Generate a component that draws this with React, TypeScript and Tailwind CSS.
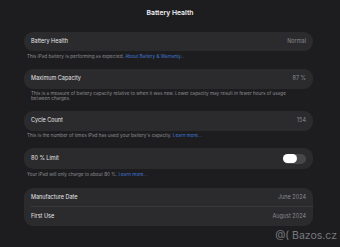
import React from 'react';

function Row({ label, value, children }: { label: string; value?: string; children?: React.ReactNode }) {
  return (
    <div className="flex h-[18.5px] items-center justify-between px-[7px]">
      <span className="text-[5.5px] text-[#e6e6e8]">{label}</span>
      {value ? <span className="text-[5.5px] text-[#8a8a8e]">{value}</span> : children}
    </div>
  );
}

function Card({ children, className = '' }: { children: React.ReactNode; className?: string }) {
  return <div className={`rounded-[9px] bg-[#2b2b2d] ${className}`}>{children}</div>;
}

function Caption({ children, className = '' }: { children: React.ReactNode; className?: string }) {
  return <p className={`text-[4.65px] leading-[5.5px] text-[#8a8a8e] ${className}`}>{children}</p>;
}

function Link({ children }: { children: React.ReactNode }) {
  return <span className="text-[#3f78d6]">{children}</span>;
}

export default function App() {
  return (
    <div
      className="relative h-[247px] w-[340px] overflow-hidden bg-[#1d1d1f]"
      style={{ fontFamily: 'Inter, "Liberation Sans", sans-serif' }}
    >
      <div className="flex h-[32px] items-start justify-center pt-[8px]">
        <h1 className="text-[6.8px] font-semibold text-[#f2f2f4]">Battery Health</h1>
      </div>

      <div className="ml-[24px] w-[289px]">
        <Card>
          <div className="h-[19px] flex items-center justify-between px-[7px]">
            <span className="text-[5.5px] text-[#e6e6e8]">Battery Health</span>
            <span className="text-[5.5px] text-[#8a8a8e]">Normal</span>
          </div>
        </Card>
        <Caption className="mt-[3px] pl-[3px]">
          This iPad battery is performing as expected. <Link>About Battery &amp; Warranty...</Link>
        </Caption>

        <Card className="mt-[9px]">
          <div className="h-[20px] flex items-center justify-between px-[7px]">
            <span className="text-[5.5px] text-[#e6e6e8]">Maximum Capacity</span>
            <span className="text-[5.5px] text-[#8a8a8e]">87 %</span>
          </div>
        </Card>
        <Caption className="mt-[2px] px-[7px]">
          This is a measure of battery capacity relative to when it was new. Lower capacity may result in fewer hours of usage
          between charges.
        </Caption>

        <Card className="mt-[9px]">
          <div className="h-[20px] flex items-center justify-between px-[7px]">
            <span className="text-[5.5px] text-[#e6e6e8]">Cycle Count</span>
            <span className="text-[5.5px] text-[#8a8a8e]">154</span>
          </div>
        </Card>
        <Caption className="mt-[2px] pl-[3px]">
          This is the number of times iPad has used your battery's capacity. <Link>Learn more...</Link>
        </Caption>

        <Card className="mt-[10px]">
          <div className="h-[21px] flex items-center justify-between px-[7px]">
            <span className="text-[5.5px] text-[#e6e6e8]">80 % Limit</span>
            <div className="flex h-[10px] w-[23px] items-center rounded-full bg-[#47474a]">
              <div className="h-[9px] w-[14px] rounded-full bg-white" />
            </div>
          </div>
        </Card>
        <Caption className="mt-[3px] pl-[3px]">
          Your iPad will only charge to about 80 %. <Link>Learn more...</Link>
        </Caption>

        <Card className="mt-[10px]">
          <Row label="Manufacture Date" value="June 2024" />
          <div className="ml-[7px] h-px bg-[#3a3a3c]" />
          <Row label="First Use" value="August 2024" />
        </Card>
      </div>

      <div className="absolute bottom-[3px] right-[3px] text-[10.5px] text-[#7a7a7e]">@( Bazos.cz</div>
    </div>
  );
}
